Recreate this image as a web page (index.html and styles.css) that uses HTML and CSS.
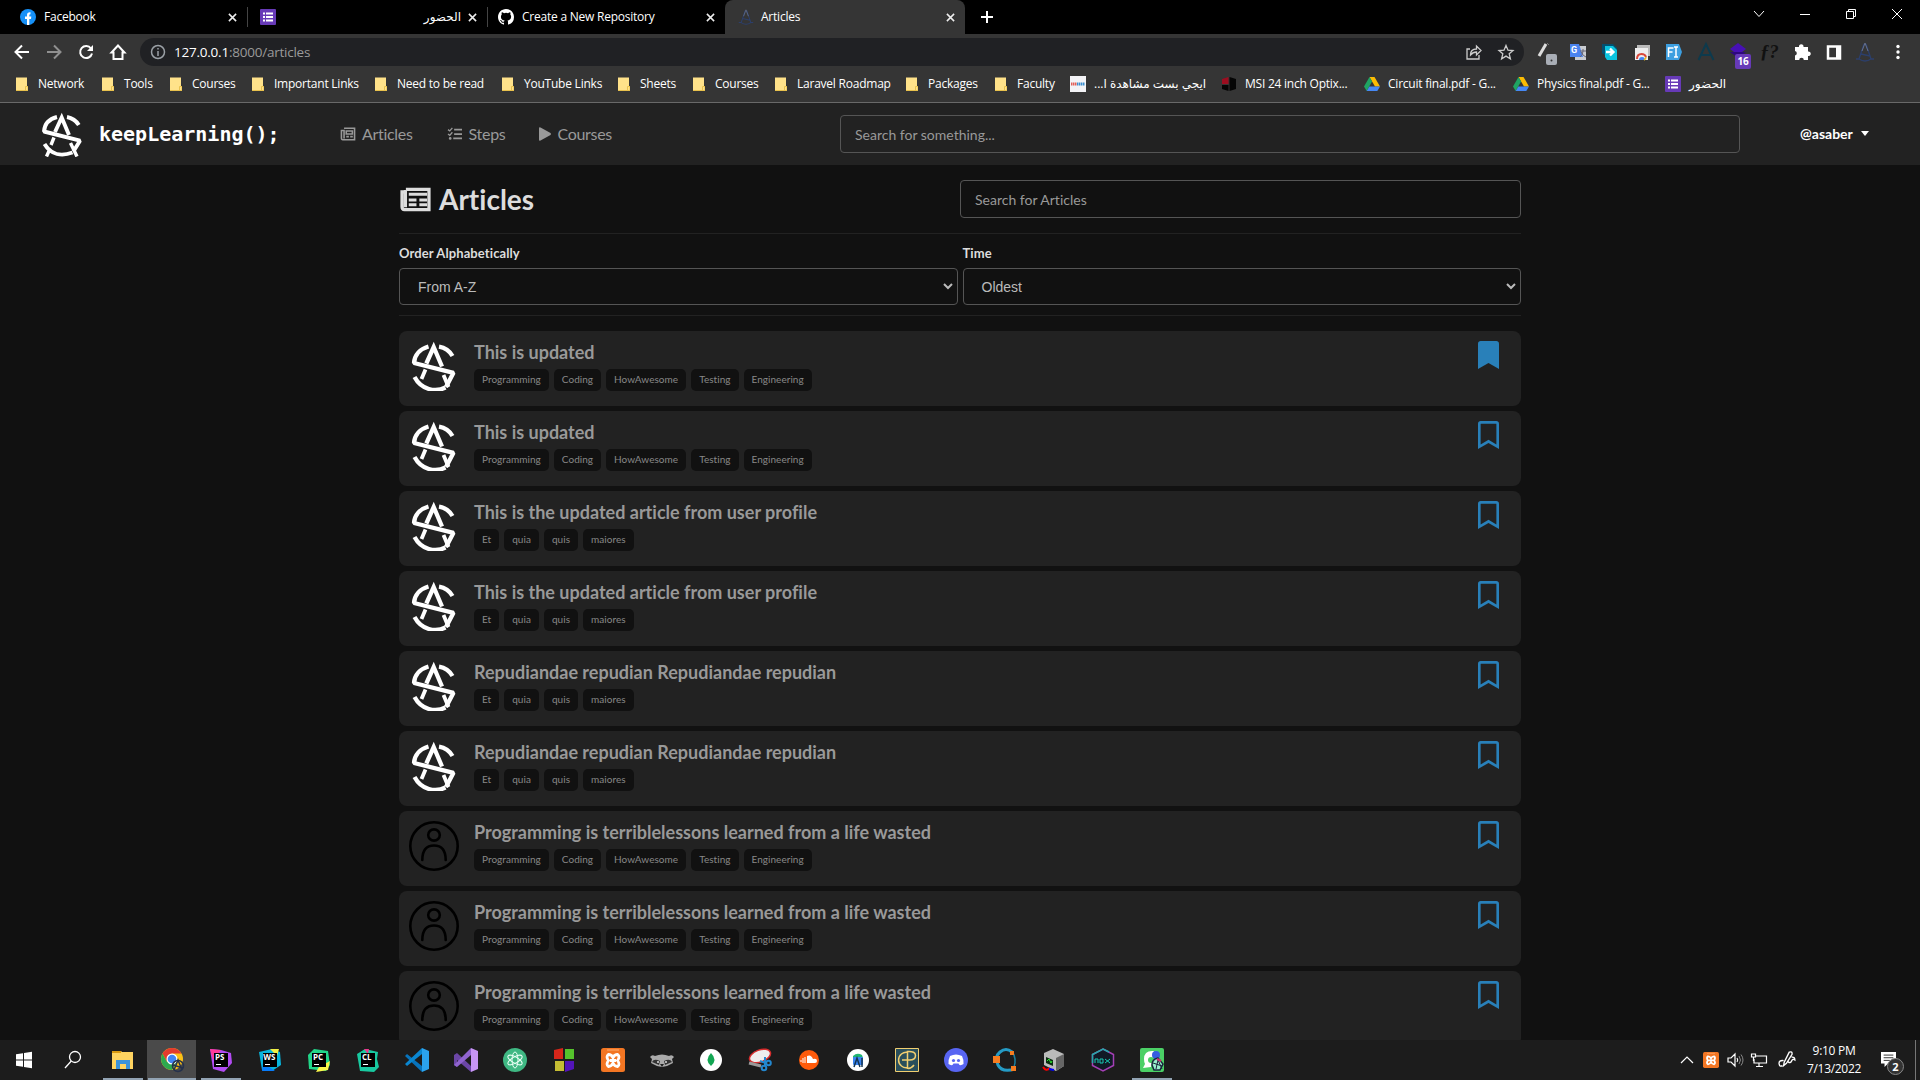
FILE: index.html
```html
<!DOCTYPE html>
<html lang="en">
<head>
<meta charset="utf-8">
<title>Articles</title>
<link rel="stylesheet" href="styles.css">
</head>
<body>
<svg class="defs" aria-hidden="true">
  <symbol id="x" viewBox="0 0 10 10"><path d="M1 1l8 8M9 1L1 9" stroke="#eee" stroke-width="1.7"/></symbol>
  <symbol id="folder" viewBox="0 0 12 14"><path d="M0 .5h11v9.500h1v4H0z" fill="#ffe28a"/><path d="M0 13.500h12V9.500h-2.500v4" fill="none" stroke="#e8c14d"/></symbol>
  <symbol id="forms" viewBox="0 0 16 16"><rect width="16" height="16" rx="1" fill="#673ab7"/><path d="M3 4.500h2M3 8h2M3 11.500h2M6 4.500h7M6 8h7M6 11.500h7" stroke="#fff" stroke-width="1.800"/></symbol>
  <symbol id="drive" viewBox="0 0 16 14"><path d="M5.500 0h5L16 9.500h-5z" fill="#fbbc04"/><path d="M5.500 0L8 4.500 2.700 14 0 9.500z" fill="#1fa463"/><path d="M5.300 9.500H16L13.300 14H2.700z" fill="#4688f4"/></symbol>
  <symbol id="mark" viewBox="0 0 44 50"><g fill="none" stroke="#fff" stroke-width="4.300"><path d="M16.500 5.500C8 8 2.500 14 2 22l39.500 9.800L34 46" stroke-linejoin="bevel"/><path d="M27 5.600c6 1 10.500 4.200 13.500 9.400"/><path d="M2.500 36c7 13 21 15.500 31 10.500"/><path d="M14.300 22.500L21.700 6l8.300 19.500" stroke-miterlimit="10"/><path d="M13.500 28.500L9.500 38M31.500 34l5 12" stroke-width="3.800"/></g></symbol>
  <symbol id="mark-full" viewBox="0 0 40 45"><g fill="none" stroke="#fff" stroke-width="3.900"><path d="M15 5C7 7 2.500 12 2 19.500l36 9.200-6.500 10.500" stroke-linejoin="bevel"/><path d="M25 5c5.500 1 9 3.500 11.800 8"/><path d="M2.500 32C9 43 20 44.500 30.500 40.500"/><path d="M13 20L19.700 5.500l7.300 17.500" stroke-miterlimit="10"/><path d="M12 25.500L9 33M7 39l-2.500 5.500M28.500 31l6.500 13.500" stroke-width="3.400"/></g></symbol>
  <symbol id="markline" viewBox="0 0 18 20"><g fill="none" stroke="#2c3f6b" stroke-width="1.300"><path d="M8 2L3 17H0M10 2l5 15h3M5 12l9 2M3 17q6 4 12 0"/></g><path d="M9 1l3 8M9 1L6 9" stroke="#65708c" fill="none"/></symbol>
  <symbol id="user" viewBox="0 0 50 50"><g fill="none" stroke="#000" stroke-width="2.600"><circle cx="25" cy="25" r="23.700"/><ellipse cx="25" cy="14" rx="5.800" ry="5.600"/><path d="M13.300 39c0-10 4-14.500 11.700-14.500s11.700 4.500 11.700 14.500" stroke-linecap="round"/></g></symbol>
  <symbol id="bm-on" viewBox="0 0 384 512"><path d="M0 512V48C0 21.500 21.500 0 48 0h288c26.500 0 48 21.500 48 48v464L192 400 0 512z" fill="#2980b9"/></symbol>
  <symbol id="bm" viewBox="0 0 384 512"><path d="M336 0H48C21.500 0 0 21.500 0 48v464l192-112 192 112V48c0-26.500-21.500-48-48-48zm0 428.400l-144-84-144 84V54a6 6 0 0 1 6-6h276c3.300 0 6 2.700 6 6v374.400z" fill="#2980b9"/></symbol>
  <symbol id="xampp" viewBox="0 0 24 24"><rect width="24" height="24" rx="2.500" fill="#f37623"/><path d="M6 2h12" stroke="#ffae70"/><path d="M7.500 6.500q3 0 4.500 3 1.500-3 4.500-3 3 2 0 6 3 4 0 6-3 0-4.500-3.500-1.500 3.500-4.500 3.500-3-2 0-6-3-4 0-6zM9 12.500h6" fill="none" stroke="#fff" stroke-width="2.800"/></symbol>
</svg>

<header class="chrome">
  <div class="tabs">
    <div class="tab"><svg class="fav" viewBox="0 0 16 16"><circle cx="8" cy="8" r="8" fill="#1690f7"/><path d="M7 16V10H5V7.500h2V6q0-3 3.500-2.700v2Q9.300 5 9.300 6.500v1h2L11 10H9.300v6z" fill="#fff"/></svg><span class="tab-title">Facebook</span><svg class="close"><use href="#x"/></svg></div>
    <div class="tab split"><svg class="fav"><use href="#forms"/></svg><span class="tab-title rtl" dir="rtl">الحضور</span><svg class="close"><use href="#x"/></svg></div>
    <div class="tab split github"><svg class="fav" viewBox="0 0 16 16"><path fill="#fff" d="M8 0C3.580 0 0 3.580 0 8c0 3.540 2.290 6.530 5.470 7.590.4.070.55-.17.550-.38v-1.490c-2.010.37-2.530-.49-2.690-.94-.09-.23-.48-.94-.82-1.130-.28-.15-.68-.52-.01-.53.63-.01 1.080.58 1.230.82.720 1.210 1.870.87 2.330.66.070-.52.280-.87.510-1.070-1.780-.2-3.640-.89-3.640-3.950 0-.87.310-1.590.82-2.150-.08-.2-.36-1.020.08-2.120 0 0 .67-.21 2.200.82a7.600 7.600 0 0 1 4 0c1.530-1.040 2.200-.82 2.200-.82.440 1.100.16 1.920.08 2.120.51.560.82 1.270.82 2.150 0 3.070-1.870 3.750-3.650 3.950.29.250.54.730.54 1.480v2.200c0 .21.150.46.550.38A8 8 0 0 0 16 8c0-4.420-3.580-8-8-8z"/></svg><span class="tab-title">Create a New Repository</span><svg class="close"><use href="#x"/></svg></div>
    <div class="tab active"><svg class="fav"><use href="#markline"/></svg><span class="tab-title">Articles</span><svg class="close"><use href="#x"/></svg></div>
    <svg class="plus" viewBox="0 0 12 12"><path d="M6 0v12M0 6h12" stroke="#fff" stroke-width="2"/></svg>
    <div class="window-controls">
      <svg viewBox="0 0 12 12"><path d="M1 3l5 5.500L11 3" class="thin"/></svg>
      <svg viewBox="0 0 12 12"><path d="M1 6.500h10" class="thin"/></svg>
      <svg viewBox="0 0 12 12"><path d="M1.500 3.500h7v7h-7zM3.500 3V1.500h7v7H9" class="thin"/></svg>
      <svg viewBox="0 0 12 12"><path d="M1 1l10 10M11 1L1 11" class="thin"/></svg>
    </div>
  </div>
  <div class="toolbar">
    <div class="nav-buttons">
      <svg viewBox="0 0 16 16"><path d="M15 8H2M8 1.500L1.500 8 8 14.500" class="bold"/></svg>
      <svg viewBox="0 0 16 16" class="off"><path d="M1 8h13M8 1.500L14.500 8 8 14.500" class="bold"/></svg>
      <svg viewBox="0 0 16 16"><path d="M13 4.500A6 6 0 1 0 14 9.500" class="bold"/><path d="M15 1v6H9z" fill="#fff"/></svg>
      <svg viewBox="0 0 16 16"><path d="M8 1.500L1.500 8.500H3.500v6.500h9V8.500h2z" class="bold"/></svg>
    </div>
    <div class="omnibox">
      <svg viewBox="0 0 16 16"><g fill="none" stroke="#9aa0a6" stroke-width="1.500"><circle cx="8" cy="8" r="6.500"/><path d="M8 7v5M8 4v1.600"/></g></svg>
      <span class="url">127.0.0.1<span class="path">:8000/articles</span></span>
      <svg class="share" viewBox="0 0 16 16"><path d="M4 5H1v10h12v-4M4.500 11q0-6 6-6V2L15 6.500 10.500 11V8Q7 8 4.500 11z" class="soft"/></svg>
      <svg viewBox="0 0 16 16"><path d="M8 1.500l2 4.700 5 .4-3.800 3.200 1.200 5L8 12.100l-4.400 2.700 1.200-5L1 6.600l5-.4z" class="soft"/></svg>
    </div>
    <div class="extensions">
      <svg viewBox="0 0 20 20"><path d="M10 2L3 14" stroke="#ddd" stroke-width="3"/><path d="M11 1l2 2" stroke="#777"/><rect x="10" y="12" width="11" height="11" rx="2" fill="#a9aeb6"/><circle cx="15.500" cy="18.500" r="1" fill="#333"/></svg>
      <svg viewBox="0 0 20 20"><rect x="7" y="4" width="11" height="14" fill="#c9ccd1"/><path d="M2 2h9l4 13H2z" fill="#4a83ee"/><text x="3" y="11" class="g">G</text><path d="M12 9h6M15 7v2q0 4-3 6m1-5q2 4 5 5" stroke="#667" fill="none"/></svg>
      <svg viewBox="0 0 20 20"><path d="M2 2h11l4 4v10H8L2 11z" fill="#03506f"/><path d="M5 4h8l4 4v10H7l-2-3z" fill="#0cc4df"/><path d="M6 10h7M10 6.500l3.500 3.500-3.500 3.500" stroke="#fff" stroke-width="2.300" fill="none"/></svg>
      <svg viewBox="0 0 20 20"><rect x="5" y="3" width="13" height="11" fill="#bbb"/><rect x="3" y="6" width="13" height="12" fill="#eee"/><path d="M5 17q0-5 4.500-5 3.500 0 4.500 3" fill="none" stroke="#d9483b" stroke-width="2"/><path d="M7 18q0-3 3-3t3 3" fill="#4285f4"/><path d="M12 18q2-1 2-3" stroke="#e8b61d" stroke-width="1.500" fill="none"/></svg>
      <svg viewBox="0 0 20 20"><path d="M2 2h13l3 8-3 8H2z" fill="#3d9fe0"/><path d="M4.500 15V6h5M4.500 10h4M10 5h4M12 5v10M10 15h4" stroke="#fff" stroke-width="1.500" fill="none"/></svg>
      <svg viewBox="0 0 20 20"><path d="M2.500 18L10 2l7.500 16M5 13h10" stroke="#0d3a4d" stroke-width="2" fill="none"/></svg>
      <span class="badged"><svg viewBox="0 0 20 20"><path d="M10 1l8 6-8 6-8-6z" fill="#4710b4"/><path d="M2 10l8 6 8-6" fill="#2e087d"/></svg><b class="badge">16</b></span>
      <span class="fx">ƒ?</span>
      <svg viewBox="0 0 20 20"><path d="M3 5h4a2.300 2.300 0 1 1 4.500 0H16v4.500a2.300 2.300 0 1 1 0 4.500v4h-4.200a2.300 2.300 0 0 0-4.600 0H3v-4.500a2.300 2.300 0 0 0 0-4.500z" fill="#fff"/></svg>
      <svg viewBox="0 0 20 20"><path d="M4 4.500h12v12H4z" fill="none" stroke="#fff" stroke-width="2.500"/><path d="M12 4h4v13h-4z" fill="#fff"/></svg>
      <svg viewBox="0 0 20 20"><use href="#markline" width="18" height="20"/></svg>
      <svg viewBox="0 0 20 20"><g fill="#fff"><circle cx="10" cy="4.500" r="1.700"/><circle cx="10" cy="10" r="1.700"/><circle cx="10" cy="15.500" r="1.700"/></g></svg>
    </div>
  </div>
  <div class="bookmarks">
    <span class="bk"><svg><use href="#folder"/></svg>Network</span>
    <span class="bk"><svg><use href="#folder"/></svg>Tools</span>
    <span class="bk"><svg><use href="#folder"/></svg>Courses</span>
    <span class="bk"><svg><use href="#folder"/></svg>Important Links</span>
    <span class="bk"><svg><use href="#folder"/></svg>Need to be read</span>
    <span class="bk"><svg><use href="#folder"/></svg>YouTube Links</span>
    <span class="bk"><svg><use href="#folder"/></svg>Sheets</span>
    <span class="bk"><svg><use href="#folder"/></svg>Courses</span>
    <span class="bk"><svg><use href="#folder"/></svg>Laravel Roadmap</span>
    <span class="bk"><svg><use href="#folder"/></svg>Packages</span>
    <span class="bk"><svg><use href="#folder"/></svg>Faculty</span>
    <span class="bk site"><svg viewBox="0 0 16 16"><rect width="16" height="16" fill="#f3f3f6"/><path d="M1 8h6" stroke="#e0605a" stroke-width="3" stroke-dasharray="1.500 .5"/><path d="M7 8h8" stroke="#3b8fd0" stroke-width="3" stroke-dasharray="1.500 .5"/></svg><span dir="rtl">ايجي بست مشاهدة ا...</span></span>
    <span class="bk site"><svg viewBox="0 0 16 16"><path d="M7.500 1v7H1V3z" fill="#9c0d20"/><path d="M8.500 1L15 3v10l-6.500 2zM1 9h6.500v6L1 13z" fill="#050505"/></svg>MSI 24 inch Optix...</span>
    <span class="bk site"><svg><use href="#drive"/></svg>Circuit final.pdf - G...</span>
    <span class="bk site"><svg><use href="#drive"/></svg>Physics final.pdf - G...</span>
    <span class="bk site"><svg><use href="#forms"/></svg><span dir="rtl">الحضور</span></span>
  </div>
</header>

<nav class="navbar">
  <svg class="logo"><use href="#mark-full"/></svg>
  <span class="brand">keepLearning();</span>
  <div class="links">
    <a><svg class="i16" viewBox="0 0 18 16"><path d="M4.500 1.500h12v13H3q-1.500 0-1.500-2V4h3M4.500 3v10" class="line"/><path d="M7 4.500h7v3.500H7zM7 11h3M11.500 11h3" class="line"/></svg>Articles</a>
    <a><svg class="i16" viewBox="0 0 16 16"><path d="M0 3l2 1.500L5 1M0 8l2 1.500L5 6" stroke="#999" stroke-width="1.500" fill="none"/><path d="M7 3h9M7 8h9M6 13h10" stroke="#999" stroke-width="2"/><circle cx="2.500" cy="13" r="1.500" fill="#999"/></svg>Steps</a>
    <a><svg class="play" viewBox="0 0 12 14"><path d="M0 1.200Q0-.3 1.500.4L11.500 6q1 1 0 2L1.500 13.600Q0 14.200 0 12.800z" fill="#999"/></svg>Courses</a>
  </div>
  <div class="field global-search">Search for something...</div>
  <div class="account">@asaber<i class="caret"></i></div>
</nav>

<main class="page">
  <div class="page-head">
    <h1><svg viewBox="0 0 32 26"><path d="M6 2.500h24v21H4.500Q2 23.500 2 20.500V5H5.500M5.500 3v18" fill="none" stroke="#ddd" stroke-width="3.400"/><path d="M9 7.500h19M9 13.500h8M20 13.500h8M9 18.500h8M20 18.500h8" stroke="#ddd" stroke-width="3"/></svg>Articles</h1>
    <div class="field">Search for Articles</div>
  </div>
  <div class="filters">
    <label>Order Alphabetically<span class="select">From A-Z<svg viewBox="0 0 10 7"><path d="M1 1l4 4 4-4" fill="none" stroke="#bbb" stroke-width="2"/></svg></span></label>
    <label>Time<span class="select">Oldest<svg viewBox="0 0 10 7"><path d="M1 1l4 4 4-4" fill="none" stroke="#bbb" stroke-width="2"/></svg></span></label>
  </div>
  <section class="list">
    <article class="card"><svg class="avatar"><use href="#mark"/></svg><div><h2>This is updated</h2><p class="tags"><span>Programming</span><span>Coding</span><span>HowAwesome</span><span>Testing</span><span>Engineering</span></p></div><svg class="save"><use href="#bm-on"/></svg></article>
    <article class="card"><svg class="avatar"><use href="#mark"/></svg><div><h2>This is updated</h2><p class="tags"><span>Programming</span><span>Coding</span><span>HowAwesome</span><span>Testing</span><span>Engineering</span></p></div><svg class="save"><use href="#bm"/></svg></article>
    <article class="card"><svg class="avatar"><use href="#mark"/></svg><div><h2>This is the updated article from user profile</h2><p class="tags"><span>Et</span><span>quia</span><span>quis</span><span>maiores</span></p></div><svg class="save"><use href="#bm"/></svg></article>
    <article class="card"><svg class="avatar"><use href="#mark"/></svg><div><h2>This is the updated article from user profile</h2><p class="tags"><span>Et</span><span>quia</span><span>quis</span><span>maiores</span></p></div><svg class="save"><use href="#bm"/></svg></article>
    <article class="card"><svg class="avatar"><use href="#mark"/></svg><div><h2>Repudiandae repudian Repudiandae repudian</h2><p class="tags"><span>Et</span><span>quia</span><span>quis</span><span>maiores</span></p></div><svg class="save"><use href="#bm"/></svg></article>
    <article class="card"><svg class="avatar"><use href="#mark"/></svg><div><h2>Repudiandae repudian Repudiandae repudian</h2><p class="tags"><span>Et</span><span>quia</span><span>quis</span><span>maiores</span></p></div><svg class="save"><use href="#bm"/></svg></article>
    <article class="card"><svg class="avatar"><use href="#user"/></svg><div><h2>Programming is terriblelessons learned from a life wasted</h2><p class="tags"><span>Programming</span><span>Coding</span><span>HowAwesome</span><span>Testing</span><span>Engineering</span></p></div><svg class="save"><use href="#bm"/></svg></article>
    <article class="card"><svg class="avatar"><use href="#user"/></svg><div><h2>Programming is terriblelessons learned from a life wasted</h2><p class="tags"><span>Programming</span><span>Coding</span><span>HowAwesome</span><span>Testing</span><span>Engineering</span></p></div><svg class="save"><use href="#bm"/></svg></article>
    <article class="card"><svg class="avatar"><use href="#user"/></svg><div><h2>Programming is terriblelessons learned from a life wasted</h2><p class="tags"><span>Programming</span><span>Coding</span><span>HowAwesome</span><span>Testing</span><span>Engineering</span></p></div><svg class="save"><use href="#bm"/></svg></article>
  </section>
</main>

<footer class="taskbar">
  <div class="apps">
    <span class="app start"><svg viewBox="0 0 24 24"><path d="M4 6.200l7-1v6.300H4zM12 5l8-1.200v7.700h-8zM4 12.500h7v6.300l-7-1zM12 12.500h8v7.700L12 19z" fill="#fff"/></svg></span>
    <span class="app search"><svg viewBox="0 0 24 24"><circle cx="14" cy="9" r="5.500" fill="none" stroke="#fff" stroke-width="1.300"/><path d="M10.300 13L4 20" stroke="#fff" stroke-width="1.300"/></svg></span>
    <span class="app open"><svg viewBox="0 0 24 24"><path d="M1 3h9l1 1h11v17H1z" fill="#ffd460"/><path d="M1 3h9v2H1z" fill="#d99a11"/><path d="M5 21v-9h14v9h-4v-5H9v5z" fill="#3b93d9"/></svg></span>
    <span class="app open current"><svg viewBox="0 0 24 24"><circle cx="12" cy="11" r="11" fill="#fbc116"/><path d="M2.500 5.500A11 11 0 0 1 21.500 5.500H12L7 14z" fill="#e33b2e"/><path d="M2.500 5.500A11 11 0 0 0 12 22l5-8H7z" fill="#2da94f"/><circle cx="12" cy="11" r="5.500" fill="#fff"/><circle cx="12" cy="11" r="4.300" fill="#4285f4"/><circle cx="18" cy="18" r="5.500" fill="none" stroke="#26324c" stroke-width="1.500"/><path d="M14 22l4-10 4 10M13 17l10 3" stroke="#26324c" stroke-width="1.500" fill="none"/></svg></span>
    <span class="app open"><svg viewBox="0 0 24 24"><path d="M1 1l11 1 10 3 1 10-8 9-11-3z" fill="#b24bf3"/><path d="M1 1l11 1-8 10z" fill="#ff3b9a"/><rect x="5" y="5" width="14" height="14"/><text x="6" y="12" class="ide">PS</text><path d="M7 16.500h5" stroke="#fff"/></svg></span>
    <span class="app"><svg viewBox="0 0 24 24"><path d="M1 4l13-3 8 3 1 13-9 6-10-1z" fill="#07b5dd"/><path d="M12 1l9 0-2 7z" fill="#f2ef45"/><path d="M5 15l-1 8 13 0z" fill="#087cfa"/><rect x="5" y="5" width="14" height="14"/><text x="5.200" y="12" class="ide">WS</text><path d="M7 16.500h5" stroke="#fff"/></svg></span>
    <span class="app"><svg viewBox="0 0 24 24"><path d="M1 7l6-6 14 2 2 14-4 6-17-2z" fill="#21d789"/><path d="M12 19l11-6-2 9-12 2z" fill="#fcf84a"/><rect x="5" y="5" width="14" height="14"/><text x="6" y="12" class="ide">PC</text><path d="M7 16.500h5" stroke="#fff"/></svg></span>
    <span class="app"><svg viewBox="0 0 24 24"><path d="M1 6l8-5 13 3-1 7 2 8-5 5-14-1z" fill="#18c9a0"/><path d="M8 1l5 0-1 5z" fill="#ed358c"/><rect x="5" y="5" width="14" height="14"/><text x="6" y="12" class="ide">CL</text><path d="M7 16.500h5" stroke="#fff"/></svg></span>
    <span class="app"><svg viewBox="0 0 24 24"><path d="M17 0v24L0 8l2-2 15 12" fill="#0873bb"/><path d="M17 0v6L2 18l-2-2z" fill="#0a87d1"/><path d="M17 0l7 3v18l-7 3z" fill="#2ba3ee"/></svg></span>
    <span class="app"><svg viewBox="0 0 24 24"><path d="M0 7l3-2 14 13v6L3 12v7l-3-2z" fill="#6b46a6"/><path d="M17 0v7L3 19l-3-2z" fill="#9064cf"/><path d="M17 0l7 3v18l-7 3z" fill="#c795f4"/></svg></span>
    <span class="app"><svg viewBox="0 0 24 24"><circle cx="12" cy="12" r="12" fill="#3fb883"/><g fill="none" stroke="#e9fff5"><ellipse cx="12" cy="12" rx="3" ry="8"/><ellipse cx="12" cy="12" rx="3" ry="8" transform="rotate(60 12 12)"/><ellipse cx="12" cy="12" rx="3" ry="8" transform="rotate(120 12 12)"/></g></svg></span>
    <span class="app"><svg viewBox="0 0 24 24"><path d="M2 2l9-2v11H2z" fill="#d7261a"/><path d="M13 1h9v10h-9z" fill="#55c22c"/><path d="M3 13h9v10H3z" fill="#c5bd33"/><path d="M13 13h9v8l-9 3z" fill="#5314b8"/></svg></span>
    <span class="app"><svg><use href="#xampp"/></svg></span>
    <span class="app"><svg viewBox="0 0 24 24"><path d="M0 9q2-3 5-1 7-3 14 0 3-2 5 1l-2 2 1 4-6 3-5 1-5-1-6-3 1-4z" fill="#aaa"/><path d="M2 14q2-4 8-1l-1 4zM22 14q-2-4-8-1l1 4z" fill="#333"/><circle cx="8" cy="14" r="1" fill="#ddd"/><circle cx="16" cy="14" r="1" fill="#ddd"/><path d="M10 16h4l-2 3z" fill="#222"/></svg></span>
    <span class="app"><svg viewBox="0 0 24 24"><circle cx="12" cy="12" r="11" fill="#fff"/><path d="M12 5q7 7 0 13-7-6 0-13z" fill="#13a653"/></svg></span>
    <span class="app"><svg viewBox="0 0 24 24"><ellipse cx="12" cy="8" rx="11" ry="6" transform="rotate(-20 12 8)" fill="#eee" stroke="#d52d2d" stroke-width="1.500"/><path d="M1 15l12 3" stroke="#999" stroke-width="3"/><g fill="none" stroke="#2387cf" stroke-width="2"><circle cx="16" cy="20" r="2.300"/><circle cx="20.500" cy="15" r="2.300"/><path d="M18 15l-6-2M17 18V9"/></g></svg></span>
    <span class="app"><svg viewBox="0 0 24 24"><circle cx="12" cy="12" r="10" fill="#ff5b0b"/><path d="M4 14v-2M6 15v-5M8 15V9" stroke="#fff"/><path d="M10 15V8q4-2 6 3 4-1 4 2 0 2-2 2z" fill="#fff"/></svg></span>
    <span class="app"><svg viewBox="0 0 24 24"><circle cx="12" cy="12" r="11" fill="#fff"/><path d="M7 8q4-4 9-1l1 3H7z" fill="#21b573"/><rect x="7" y="9" width="10" height="8" rx="1" fill="#3983ef"/><path d="M8 19l3-9 3 9M16 10v9" stroke="#143552" stroke-width="1.500" fill="none"/></svg></span>
    <span class="app"><svg viewBox="0 0 24 24"><path d="M.5.500h23v23H.5z" fill="#294f5b" stroke="#f0ce70"/><path d="M13 4.500A7.700 7.700 0 1 0 13 19.500M19 17q-2 3-6 3.500M12.500 21V3.500q8-.5 8 4t-6 4.500H7" fill="none" stroke="#f0ce70" stroke-width="1.500"/></svg></span>
    <span class="app"><svg viewBox="0 0 24 24"><circle cx="12" cy="12" r="12" fill="#5865f2"/><path d="M6 8q6-3 12 0 2 4 1.500 8-2 1.500-4 1l-1-1.500h-5L8.500 17q-2 .5-4-1Q4 12 6 8z" fill="#fff"/><circle cx="9.500" cy="12.500" r="1.600" fill="#5865f2"/><circle cx="14.500" cy="12.500" r="1.600" fill="#5865f2"/></svg></span>
    <span class="app"><svg viewBox="0 0 24 24"><path d="M19 4Q13-1 7 4T5 17t17 4" fill="none" stroke="#259bc5" stroke-width="3"/><path d="M19 3q5 8 2 16" fill="none" stroke="#1b7e9e" stroke-width="1.500"/><path d="M0 8h7v7H0zM17 3h4v4h-4zM18 18h5v5h-5z" fill="#f57c20"/></svg></span>
    <span class="app"><svg viewBox="0 0 24 24"><path d="M2 5l9-4 11 5v12l-8 5-12-6z" fill="#bbb"/><path d="M14 10l8-4v12l-8 5z" fill="#666"/><path d="M4 9l7 3v6l-7-3z" fill="#092b10"/><path d="M5 13l2-2 2 4 1-2" stroke="#2ee82e" fill="none"/><path d="M1 19q3 5 7 1" stroke="#f00" fill="none" stroke-width="2"/><path d="M7 21l5 1" stroke="#00f" stroke-width="2"/></svg></span>
    <span class="app"><svg viewBox="0 0 24 24"><path d="M12 1l10.500 5.500v11L12 23 1.500 17.500v-11z" fill="#111a26" stroke="#a53fb5" stroke-width="1.500"/><path d="M1.500 15V6.500L12 1l6 3" fill="none" stroke="#25a9aa" stroke-width="1.500"/><path d="M4 15v-4h3v4M9 11h3v4H9zM14 11l5 4M19 11l-5 4" stroke="#18cbb5" fill="none"/></svg></span>
    <span class="app open"><svg viewBox="0 0 24 24"><rect width="24" height="24" rx="2" fill="#4bd066"/><path d="M14 3Q4 2 4 11q0 3 1 5l-2 4 8-1" fill="#fff"/><circle cx="16" cy="7" r="4" fill="#365de0"/><circle cx="11" cy="12" r="3" fill="#4bd066"/><path d="M12 17q0-6 6-7l5 6-3 6h-6z" fill="#9ec" stroke="#18243c" stroke-width="1.500"/><path d="M13 15l9 3M16 21l2-9 4 9" stroke="#18243c" fill="none"/><path d="M17 11l4 2" stroke="#d52d70" stroke-width="2"/></svg></span>
  </div>
  <div class="tray">
    <svg viewBox="0 0 16 16"><path d="M2 11l6-6 6 6" class="white"/></svg>
    <svg viewBox="0 0 24 24"><use href="#xampp"/></svg>
    <svg viewBox="0 0 16 16"><path d="M1 6h3l4-4v12L4 10H1zM10 6q1.500 2 0 4" class="white"/><path d="M12 4q3 4 0 8M14 2.500q4 5.500 0 11" stroke="#888" fill="none"/></svg>
    <svg viewBox="0 0 16 16"><path d="M5 4h10.500v7H3V7M8 11v3M5 14.500h7M.5 2h4v3h-4zM2.500 5v4" class="white"/></svg>
    <svg class="pen" viewBox="0 0 16 16"><path d="M10 1q3-1 2.500 2l-5 8-2.500 2 .5-3zM5 8.500Q.5 8 1 11.500q.5 3 3 1.500M9 9.500q2 2 3-.5t3-1q0-3-3-2.500" class="white"/></svg>
    <div class="clock"><span>9:10 PM</span><span>7/13/2022</span></div>
    <div class="notify"><svg viewBox="0 0 17 17"><path d="M0 0h17v13H8l-4 4v-4H0z" fill="#fff"/><path d="M3 3.500h11M3 6.500h11M3 9.500h7" stroke="#1c1c1c"/></svg><b class="count">2</b></div>
  </div>
</footer>
</body>
</html>
```
FILE: styles.css
```css
* { box-sizing: border-box; }
body { margin: 0; width: 1920px; height: 1080px; overflow: hidden; display: flex; flex-direction: column; background: #111; color: #ddd; font-family: Lato, sans-serif; font-variant-ligatures: none; }
svg { flex: none; overflow: visible; }
.defs { width: 0; height: 0; position: absolute; }

/* Browser frame */
.chrome { flex: none; height: 103px; background: #353535; border-bottom: 1px solid #696969; color: #fff; font-family: "Open Sans", "Noto Sans", "DejaVu Sans", sans-serif; font-size: 12px; letter-spacing: -.23px; }
.tabs { display: flex; height: 34px; background: #000; padding-left: 7px; align-items: center; }
.tab { display: flex; align-items: center; width: 240px; height: 34px; padding: 0 10px 0 13px; }
.tab.split { background: linear-gradient(#444, #444) 0 50% / 1px 20px no-repeat; }
.tab.github { padding: 0 12px 0 11px; }
.tab.active { background: #353535; border-radius: 8px 8px 0 0; margin-left: -2px; }
.fav { width: 16px; height: 16px; }
.tab-title { flex: 1; padding: 0 7px 1px 8px; white-space: nowrap; }
.tab.active .tab-title { padding-left: 7px; }
.close { width: 9px; height: 9px; }
.plus { width: 12px; height: 12px; margin-left: 16px; }
.window-controls { display: flex; margin: -6px 17px 0 auto; gap: 34px; }
.window-controls svg { width: 12px; height: 12px; }
.thin { fill: none; stroke: #fff; stroke-width: 1; }
.toolbar { display: flex; height: 32px; align-items: flex-end; padding-left: 14px; }
.nav-buttons { display: flex; gap: 16px; width: 126px; height: 28px; align-items: center; }
.nav-buttons svg { width: 16px; height: 16px; }
.bold { fill: none; stroke: #fff; stroke-width: 2; }
.off { opacity: .45; }
.soft { fill: none; stroke: #ccc; stroke-width: 1.300; }
.omnibox { display: flex; align-items: center; width: 1384px; height: 28px; border-radius: 14px; background: #202124; padding: 0 10px; }
.omnibox svg { width: 16px; height: 16px; }
.url { flex: 1; font-size: 13.500px; padding-left: 8px; }
.path { color: #9a9a9a; }
.omnibox .share { margin-right: 16px; }
.extensions { display: flex; gap: 12px; height: 28px; align-items: center; margin-left: 12px; }
.extensions svg { width: 20px; height: 20px; display: block; }
.g { font: bold 9px Roboto, sans-serif; fill: #fff; }
.badged { position: relative; }
.badge { position: absolute; left: 7px; top: 12px; width: 16px; height: 15px; border-radius: 2px; background: #673ab7; font-size: 10px; line-height: 14px; text-align: center; }
.fx { width: 20px; font: italic bold 19px/20px "Liberation Serif", serif; color: #111; }
.bookmarks { display: grid; grid-template-columns: 86px 68px 82px 123px 127px 116px 75px 82px 131px 89px 75px 151px 143px 149px 152px 80px; padding: 0 0 1px 16px; height: 36px; align-items: center; }
.bk { display: flex; align-items: center; gap: 10px; white-space: nowrap; }
.bk svg { width: 12px; height: 14px; }
.bk.site { gap: 8px; }
.bk.site svg { width: 16px; height: 16px; }

/* Site navigation */
.navbar { flex: none; display: flex; align-items: center; height: 62px; background: #222; padding-left: 42px; }
.logo { width: 40px; height: 45px; }
.brand { width: 241px; margin-left: 17px; font: bold 20px "DejaVu Sans Mono", monospace; color: #fff; }
.links { display: flex; width: 500px; gap: 34px; font-size: 16px; letter-spacing: -.3px; color: #999; }
.links a { display: flex; align-items: center; gap: 6px; line-height: 20px; padding-bottom: 1px; }
.i16 { width: 16px; height: 14px; }
.play { width: 12px; height: 14px; }
.line { fill: none; stroke: #999; stroke-width: 1.800; }
.field { height: 38px; border: 1px solid #555; border-radius: 4px; padding: 0 14px; font-size: 14px; line-height: 37px; color: #999; }
.global-search { width: 900px; }
.account { display: flex; align-items: center; margin-left: 60px; padding-bottom: 1px; font-size: 14px; font-weight: bold; color: #fff; }
.caret { margin-left: 8px; border: 4.500px solid transparent; border-top: 5px solid #fff; border-bottom: 0; }

/* Article list */
.page { flex: 1; min-height: 0; overflow: hidden; width: 1122px; margin-left: 399px; padding-top: 15px; }
.page-head { display: grid; grid-template-columns: 1fr 561px; height: 54px; border-bottom: 1px solid #222; }
h1 { display: flex; align-items: center; gap: 7px; height: 38px; margin: 0; font-size: 28px; }
h1 svg { width: 33px; height: 25px; }
.filters { display: grid; grid-template-columns: 1fr 1fr; gap: 5px; height: 82px; border-bottom: 1px solid #222; padding-top: 9px; }
.filters label { font-size: 13px; font-weight: bold; line-height: 20px; letter-spacing: .1px; }
.select { display: flex; align-items: center; justify-content: space-between; height: 37px; margin-top: 5px; padding: 0 4px 0 18px; border: 1px solid #555; border-radius: 4px; font: 14px "Liberation Sans", sans-serif; letter-spacing: 0; color: #bbb; }
.select svg { width: 10px; height: 7px; }
.list { display: grid; gap: 5px; padding-top: 15px; }
.card { display: flex; height: 75px; padding: 10px 22px 0 10px; border-radius: 8px; background: #222; }
.card > div { flex: 1; padding-left: 15px; }
.avatar { width: 50px; height: 50px; }
h2 { margin: 0; font-size: 18px; line-height: 22px; color: #999; }
.tags { display: flex; gap: 5px; margin: 6px 0 0; }
.tags span { height: 22px; padding: 0 8px; border-radius: 5px; background: #111; color: #888; font-size: 10px; line-height: 21px; letter-spacing: .04px; }
.save { width: 21px; height: 28px; }

/* Desktop taskbar */
.taskbar { flex: none; display: flex; justify-content: space-between; height: 40px; background: #1c1c1c; color: #fff; font: 12px "Open Sans", "Noto Sans", sans-serif; }
.apps { display: flex; }
.app { display: flex; align-items: center; justify-content: center; width: 49px; height: 40px; }
.app.start, .app.search { padding-right: 2px; }
.app svg { width: 24px; height: 24px; }
.open { background: linear-gradient(#92a3b3, #92a3b3) 50% 100% / 40px 2px no-repeat; }
.current { background: linear-gradient(#92a3b3, #92a3b3) 50% 100% / 48px 2px no-repeat, #4a4a4a; }
.ide { font: bold 8px "Open Sans", sans-serif; fill: #fff; }
.tray { display: flex; align-items: center; gap: 8px; padding-right: 4px; }
.tray > svg { width: 16px; height: 16px; }
.tray > .pen { margin-left: 3px; width: 18px; height: 18px; }
.white { fill: none; stroke: #fff; stroke-width: 1.200; }
.clock { display: flex; flex-direction: column; align-items: center; width: 60px; letter-spacing: -.3px; line-height: 18px; }
.notify { position: relative; display: flex; width: 44px; height: 40px; padding: 12px 0 0 8px; border-right: 1px solid #777; }
.notify svg { width: 17px; height: 15px; }
.count { position: absolute; left: 15px; top: 18px; width: 17px; height: 17px; border: 1px solid #888; border-radius: 50%; background: #333; font-size: 11px; line-height: 15px; text-align: center; }
```
